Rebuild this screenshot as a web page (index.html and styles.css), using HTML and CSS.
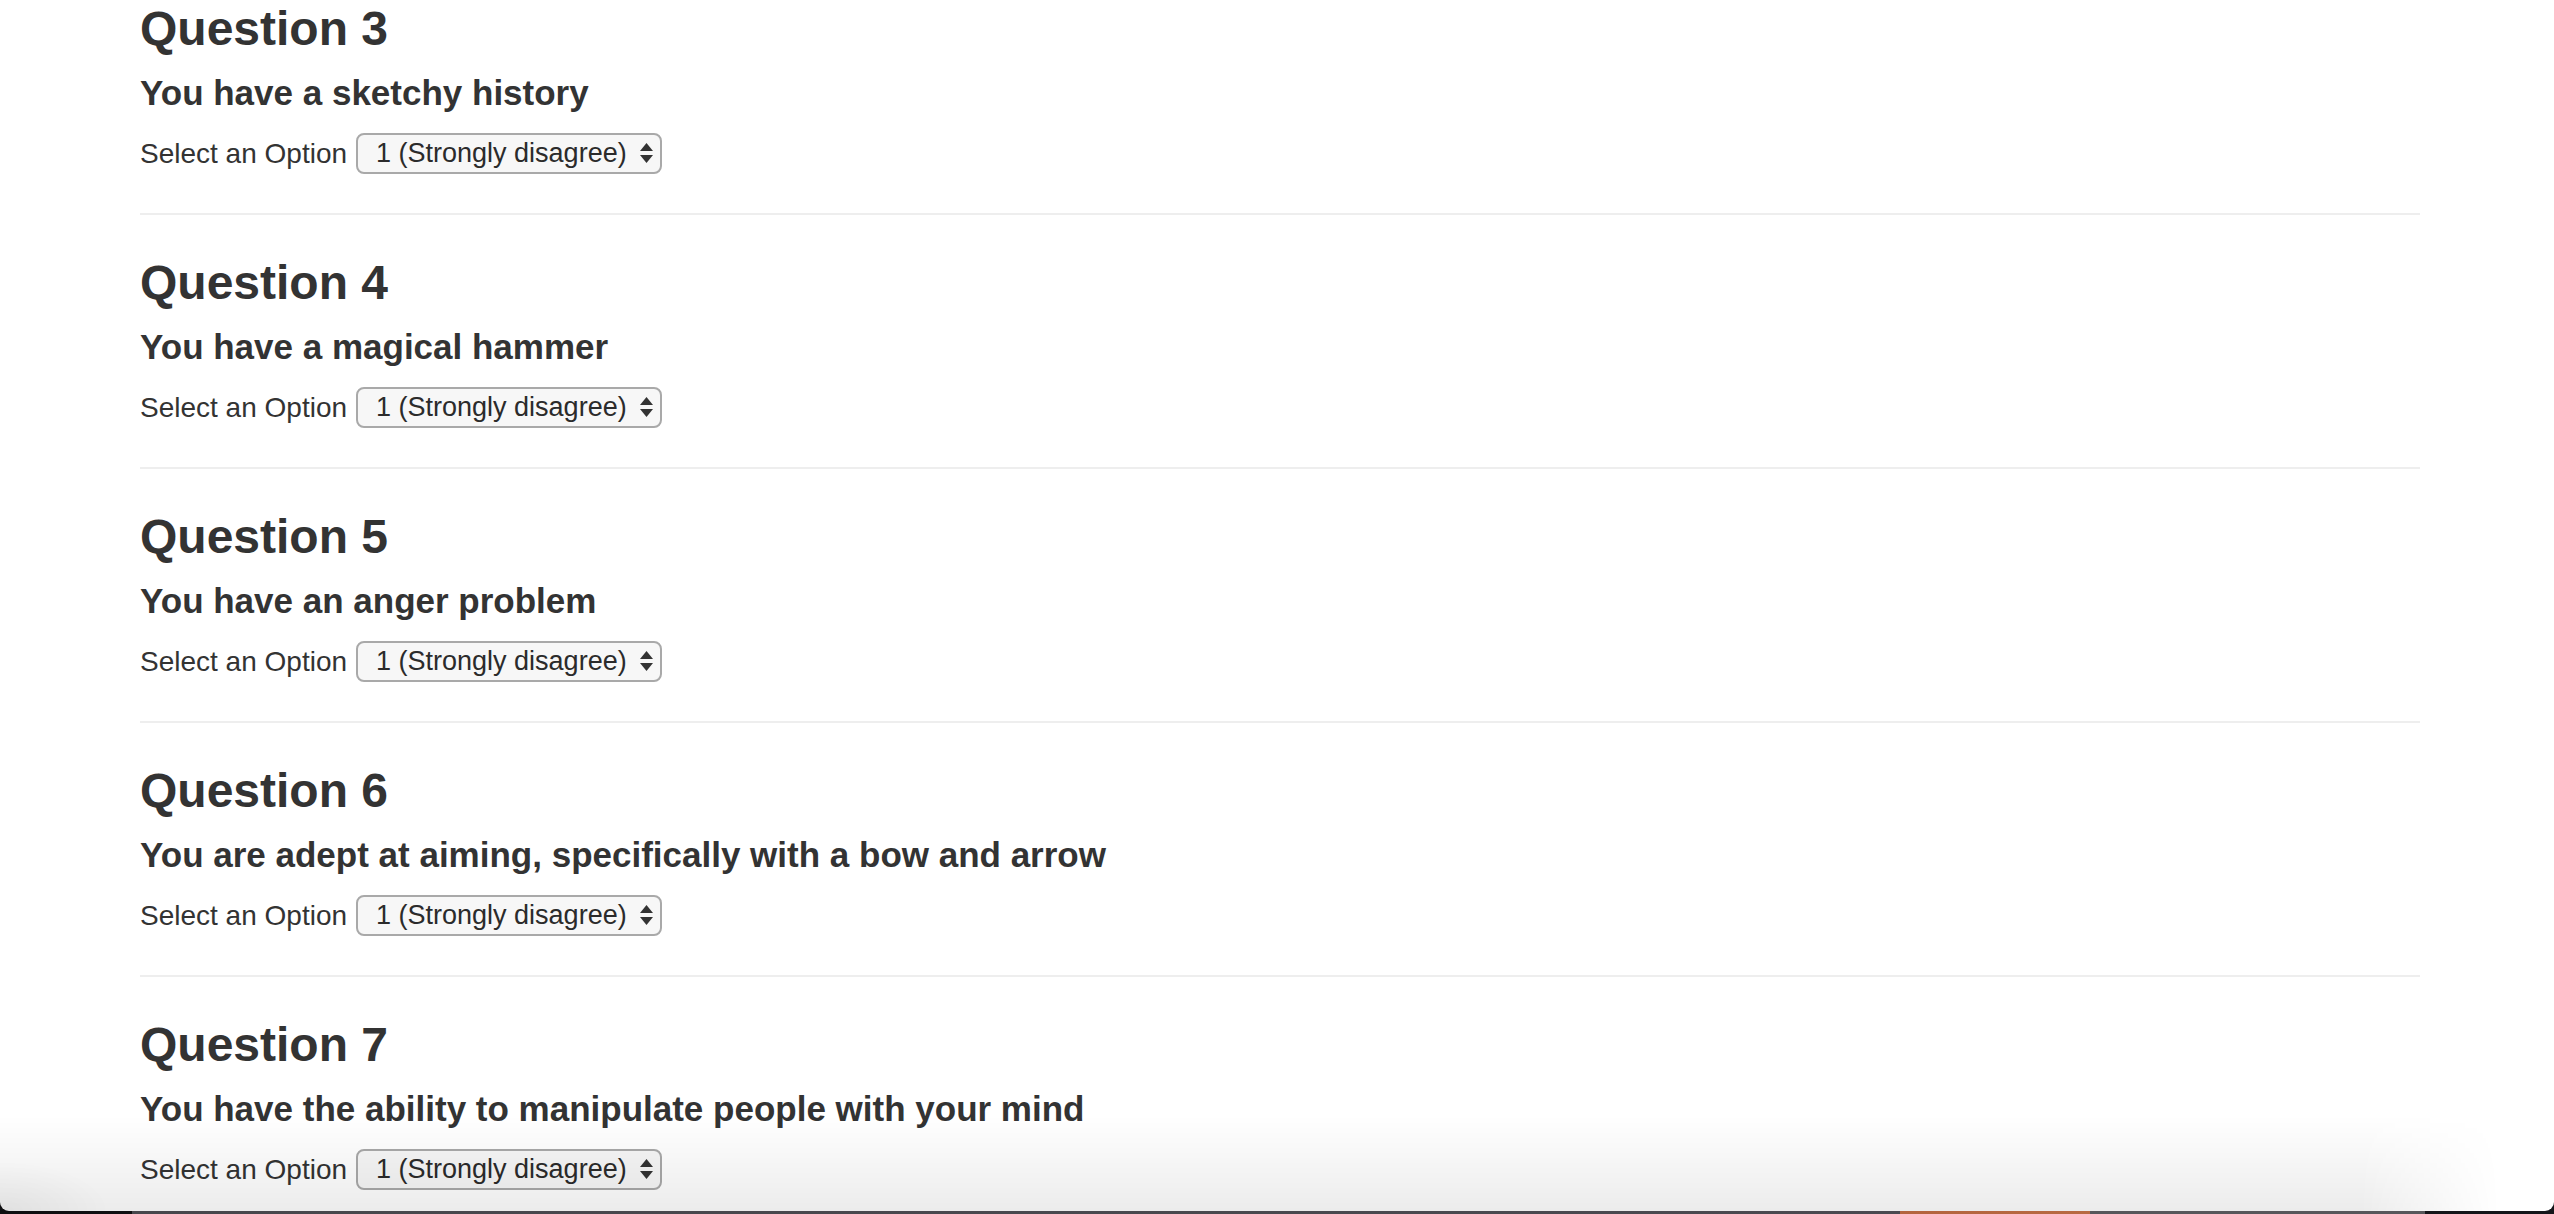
FILE: index.html
```html
<!DOCTYPE html>
<html lang="en">
<head>
<meta charset="utf-8">
<title>Quiz</title>
<link rel="stylesheet" href="styles.css">
</head>
<body>
<div class="window">
  <div class="container">
    <section class="question">
      <h2>Question 3</h2>
      <h4>You have a sketchy history</h4>
      <div class="answer">
        <label for="q3">Select an Option</label>
        <span class="select-wrap">
          <select id="q3"><option>1 (Strongly disagree)</option><option>2</option><option>3</option><option>4</option><option>5 (Strongly agree)</option></select>
          <svg class="arrows" viewBox="0 0 13 20" aria-hidden="true"><polygon points="0,8 6.5,0 13,8"/><polygon points="0,12 13,12 6.5,20"/></svg>
        </span>
      </div>
    </section>
    <hr>
    <section class="question">
      <h2>Question 4</h2>
      <h4>You have a magical hammer</h4>
      <div class="answer">
        <label for="q4">Select an Option</label>
        <span class="select-wrap">
          <select id="q4"><option>1 (Strongly disagree)</option><option>2</option><option>3</option><option>4</option><option>5 (Strongly agree)</option></select>
          <svg class="arrows" viewBox="0 0 13 20" aria-hidden="true"><polygon points="0,8 6.5,0 13,8"/><polygon points="0,12 13,12 6.5,20"/></svg>
        </span>
      </div>
    </section>
    <hr>
    <section class="question">
      <h2>Question 5</h2>
      <h4>You have an anger problem</h4>
      <div class="answer">
        <label for="q5">Select an Option</label>
        <span class="select-wrap">
          <select id="q5"><option>1 (Strongly disagree)</option><option>2</option><option>3</option><option>4</option><option>5 (Strongly agree)</option></select>
          <svg class="arrows" viewBox="0 0 13 20" aria-hidden="true"><polygon points="0,8 6.5,0 13,8"/><polygon points="0,12 13,12 6.5,20"/></svg>
        </span>
      </div>
    </section>
    <hr>
    <section class="question">
      <h2>Question 6</h2>
      <h4>You are adept at aiming, specifically with a bow and arrow</h4>
      <div class="answer">
        <label for="q6">Select an Option</label>
        <span class="select-wrap">
          <select id="q6"><option>1 (Strongly disagree)</option><option>2</option><option>3</option><option>4</option><option>5 (Strongly agree)</option></select>
          <svg class="arrows" viewBox="0 0 13 20" aria-hidden="true"><polygon points="0,8 6.5,0 13,8"/><polygon points="0,12 13,12 6.5,20"/></svg>
        </span>
      </div>
    </section>
    <hr>
    <section class="question">
      <h2>Question 7</h2>
      <h4>You have the ability to manipulate people with your mind</h4>
      <div class="answer">
        <label for="q7">Select an Option</label>
        <span class="select-wrap">
          <select id="q7"><option>1 (Strongly disagree)</option><option>2</option><option>3</option><option>4</option><option>5 (Strongly agree)</option></select>
          <svg class="arrows" viewBox="0 0 13 20" aria-hidden="true"><polygon points="0,8 6.5,0 13,8"/><polygon points="0,12 13,12 6.5,20"/></svg>
        </span>
      </div>
    </section>
    <hr>
  </div>
  <div class="shade"></div>
</div>
</body>
</html>
```

FILE: styles.css
```css
html, body {
  margin: 0;
  height: 100%;
  overflow: hidden;
}

body {
  font-family: "Liberation Sans", Arial, sans-serif;
  color: #333333;
  background: linear-gradient(to right,
    #0f0f11 0, #0f0f11 132px,
    #47474c 132px, #4a4a50 1900px,
    #b4643e 1900px, #b86a42 2090px,
    #57575b 2090px, #57575b 2425px,
    #14161a 2425px);
}

.window {
  position: relative;
  height: calc(100% - 3px);
  background: #ffffff;
  border-radius: 0 0 9px 9px;
  overflow: hidden;
}

.container {
  width: 2280px;
  margin-left: 140px;
  padding-top: 3px;
}

.question h2 {
  margin: 0;
  font-size: 48px;
  line-height: 52px;
  font-weight: bold;
}

.question h4 {
  margin: 19px 0 0;
  font-size: 35px;
  line-height: 38px;
  font-weight: bold;
}

.answer {
  display: flex;
  align-items: center;
  gap: 9px;
  margin-top: 21px;
  height: 41px;
}

.answer label {
  font-size: 28px;
  line-height: 41px;
}

.select-wrap {
  position: relative;
  display: inline-flex;
}

.select-wrap select {
  -webkit-appearance: none;
  appearance: none;
  box-sizing: border-box;
  width: 306px;
  height: 41px;
  margin: 0;
  padding: 0 0 0 18px;
  border: 2px solid #a9a9a9;
  border-radius: 8px;
  background: #f7f7f7;
  color: #2b2b2b;
  font-family: "Liberation Sans", Arial, sans-serif;
  font-size: 27px;
  line-height: 37px;
}

.arrows {
  position: absolute;
  right: 9px;
  top: 10px;
  width: 13px;
  height: 20px;
  fill: #333333;
  pointer-events: none;
}

hr {
  height: 0;
  margin: 39px 0 42px;
  border: 0;
  border-top: 2px solid #eeeeee;
}

.shade {
  position: absolute;
  left: 0;
  right: 0;
  bottom: 0;
  height: 96px;
  pointer-events: none;
  background:
    radial-gradient(ellipse 110px 50px at 0 100%, rgba(0,0,0,0.05), rgba(0,0,0,0)),
    linear-gradient(to bottom, rgba(0,0,0,0), rgba(0,0,0,0.075));
  -webkit-mask-image: linear-gradient(to right, #000 0, #000 2360px, rgba(0,0,0,0) 2500px);
  mask-image: linear-gradient(to right, #000 0, #000 2360px, rgba(0,0,0,0) 2500px);
}
```
